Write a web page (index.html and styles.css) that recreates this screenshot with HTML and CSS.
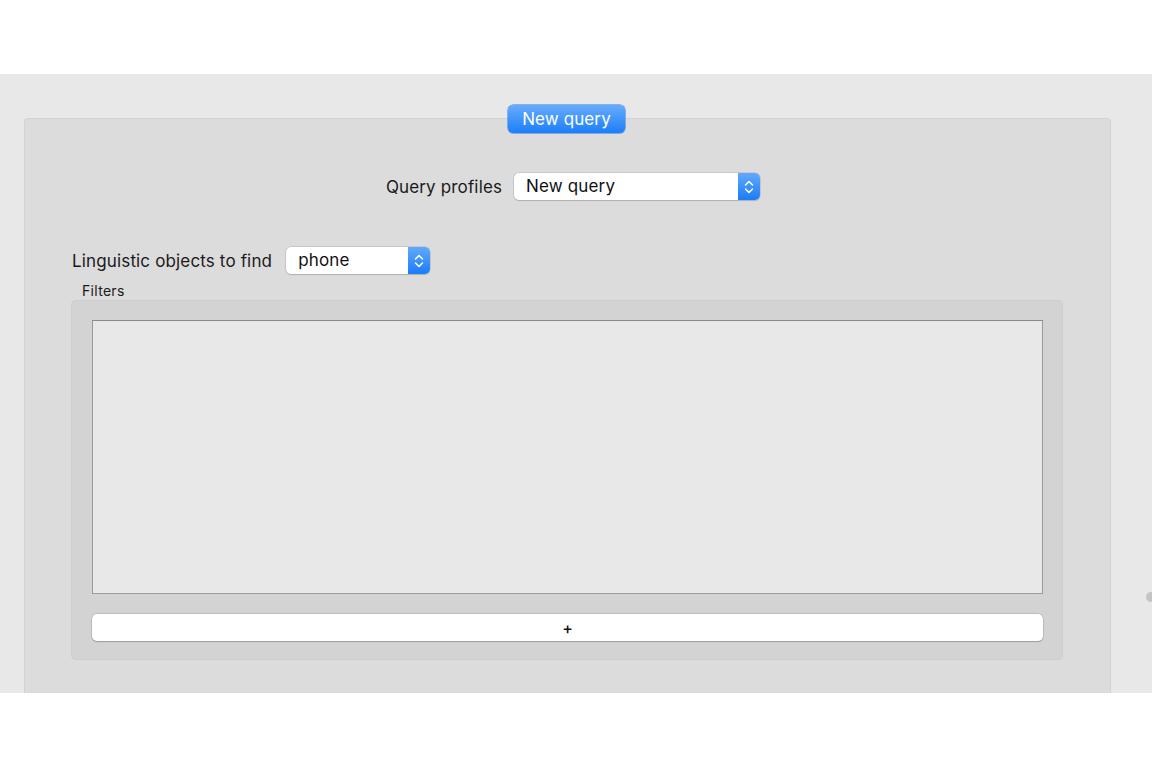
FILE: index.html
```html
<!DOCTYPE html>
<html>
<head>
<meta charset="utf-8">
<link rel="stylesheet" href="styles.css">
</head>
<body>
<div class="top-space"></div>
<div class="window">
  <div class="group">
    <button class="tab">New query</button>
    <div class="profiles-row">
      <span class="label">Query profiles</span>
      <div class="popup popup-wide">
        <span class="popup-text">New query</span>
        <span class="popup-arrow"><svg width="10" height="16" viewBox="0 0 10 16"><path d="M1.5 6 L5 2.5 L8.5 6 M1.5 10 L5 13.5 L8.5 10" fill="none" stroke="#fff" stroke-width="1.5" stroke-linecap="round" stroke-linejoin="round"/></svg></span>
      </div>
    </div>
    <div class="objects-row">
      <span class="label">Linguistic objects to find</span>
      <div class="popup popup-narrow">
        <span class="popup-text">phone</span>
        <span class="popup-arrow"><svg width="10" height="16" viewBox="0 0 10 16"><path d="M1.5 6 L5 2.5 L8.5 6 M1.5 10 L5 13.5 L8.5 10" fill="none" stroke="#fff" stroke-width="1.5" stroke-linecap="round" stroke-linejoin="round"/></svg></span>
      </div>
    </div>
    <div class="filters-label">Filters</div>
    <div class="filters-box">
      <div class="filters-table"></div>
      <button class="add-btn">+</button>
    </div>
  </div>
  <div class="side-knob"></div>
</div>
</body>
</html>
```

FILE: styles.css
```css
html, body {
  margin: 0;
  padding: 0;
  background: #ffffff;
  font-family: "Inter", "Liberation Sans", sans-serif;
  color: #1a1a1a;
}
.top-space {
  height: 74px;
}
.window {
  position: relative;
  height: 619px;
  background: #e8e8e8;
  display: flex;
  flex-direction: column;
  padding: 44px 0 0 24px;
  box-sizing: border-box;
  overflow: hidden;
}
.group {
  position: relative;
  width: 1087px;
  flex: 1;
  background: #dcdcdc;
  border: 1px solid #d2d2d2;
  border-bottom: none;
  border-radius: 4px 4px 0 0;
  box-sizing: border-box;
  display: flex;
  flex-direction: column;
}
.tab {
  position: absolute;
  top: -14px;
  left: 483px;
  width: 117px;
  height: 28px;
  border: none;
  border-radius: 5px;
  background: linear-gradient(#67acfc, #1c7ef8);
  box-shadow: 0 0 0 0.5px #2a78e0;
  color: #fff;
  font-family: inherit;
  font-size: 17px;
  letter-spacing: 0.1px;
  padding: 0;
  line-height: 28px;
}
.profiles-row {
  display: flex;
  align-items: center;
  justify-content: center;
  gap: 12px;
  margin-top: 54px;
  padding-left: 11px;
}
.label {
  font-size: 17px;
  letter-spacing: 0.15px;
}
.popup {
  display: flex;
  height: 27px;
  background: #fff;
  border-radius: 5px;
  box-shadow: 0 0 0 0.5px #b4b4b4, 0 1px 1px rgba(0,0,0,0.2);
  box-sizing: border-box;
  overflow: hidden;
}
.popup-wide {
  width: 246px;
}
.popup-narrow {
  width: 144px;
}
.popup-text {
  flex: 1;
  padding-left: 12px;
  font-size: 17px;
  letter-spacing: 0.15px;
  line-height: 26px;
  color: #111;
}
.popup-arrow {
  width: 22px;
  background: linear-gradient(#62a9fc, #1a7cf8);
  display: flex;
  align-items: center;
  justify-content: center;
}
.objects-row {
  display: flex;
  align-items: center;
  gap: 14px;
  margin-top: 47px;
  padding-left: 47px;
}
.filters-label {
  font-size: 14px;
  letter-spacing: 0.3px;
  margin: 8px 0 0 57px;
  height: 17px;
  line-height: 17px;
}
.filters-box {
  margin: 1px 0 0 46px;
  width: 992px;
  height: 360px;
  background: #d3d3d3;
  border: 1px solid #cdcdcd;
  border-radius: 5px;
  box-sizing: border-box;
  padding: 19px 19px 18px 20px;
  display: flex;
  flex-direction: column;
  gap: 20px;
}
.filters-table {
  height: 274px;
  background: #e8e8e8;
  border: 1px solid #9a9a9a;
  border-top-color: #8a8a8a;
  box-sizing: border-box;
}
.add-btn {
  height: 27px;
  background: #fff;
  border: none;
  border-radius: 5px;
  box-shadow: 0 0 0 0.5px #a8a8a8, 0 1px 1px rgba(0,0,0,0.3);
  font-family: inherit;
  font-size: 16px;
  font-weight: 500;
  color: #111;
  padding: 0;
}
.side-knob {
  position: absolute;
  right: -4px;
  top: 518px;
  width: 10px;
  height: 10px;
  border-radius: 50%;
  background: #c4c4c4;
}
```
